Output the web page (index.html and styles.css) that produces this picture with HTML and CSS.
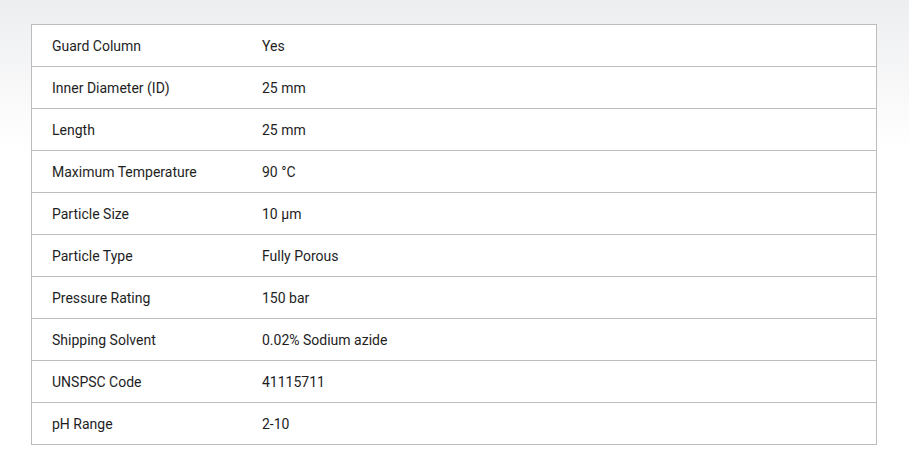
FILE: index.html
```html
<!DOCTYPE html>
<html lang="en">
<head>
  <meta charset="utf-8">
  <title>Specifications</title>
  <link rel="stylesheet" href="styles.css">
</head>
<body>
  <div class="spec-container">
    <table class="spec-tbl">
      <tr><td class="spec-name">Guard Column</td><td class="spec-value">Yes</td></tr>
      <tr><td class="spec-name">Inner Diameter (ID)</td><td class="spec-value">25 mm</td></tr>
      <tr><td class="spec-name">Length</td><td class="spec-value">25 mm</td></tr>
      <tr><td class="spec-name">Maximum Temperature</td><td class="spec-value">90 °C</td></tr>
      <tr><td class="spec-name">Particle Size</td><td class="spec-value">10 µm</td></tr>
      <tr><td class="spec-name">Particle Type</td><td class="spec-value">Fully Porous</td></tr>
      <tr><td class="spec-name">Pressure Rating</td><td class="spec-value">150 bar</td></tr>
      <tr><td class="spec-name">Shipping Solvent</td><td class="spec-value">0.02% Sodium azide</td></tr>
      <tr><td class="spec-name">UNSPSC Code</td><td class="spec-value">41115711</td></tr>
      <tr><td class="spec-name">pH Range</td><td class="spec-value">2-10</td></tr>
    </table>
  </div>
</body>
</html>
```

FILE: styles.css
```css
html, body {
  margin: 0;
  height: 100%;
}
body {
  font-family: Roboto, "Liberation Sans", sans-serif;
  font-size: 14px;
  color: #1e1e1e;
  background: linear-gradient(to bottom, #edeef0 0, #ffffff 150px) no-repeat;
  background-color: #fff;
}
.spec-container {
  padding: 24px 32px 0 31px;
}
.spec-tbl {
  width: 100%;
  border-collapse: collapse;
  background: white;
}
.spec-tbl td {
  border: 1px solid #bcbcbc;
  padding: 13px 20px 11px;
  line-height: 17px;
  text-align: left;
}
.spec-name {
  width: 170px;
  border-right: none !important;
}
.spec-value {
  border-left: none !important;
}
```
